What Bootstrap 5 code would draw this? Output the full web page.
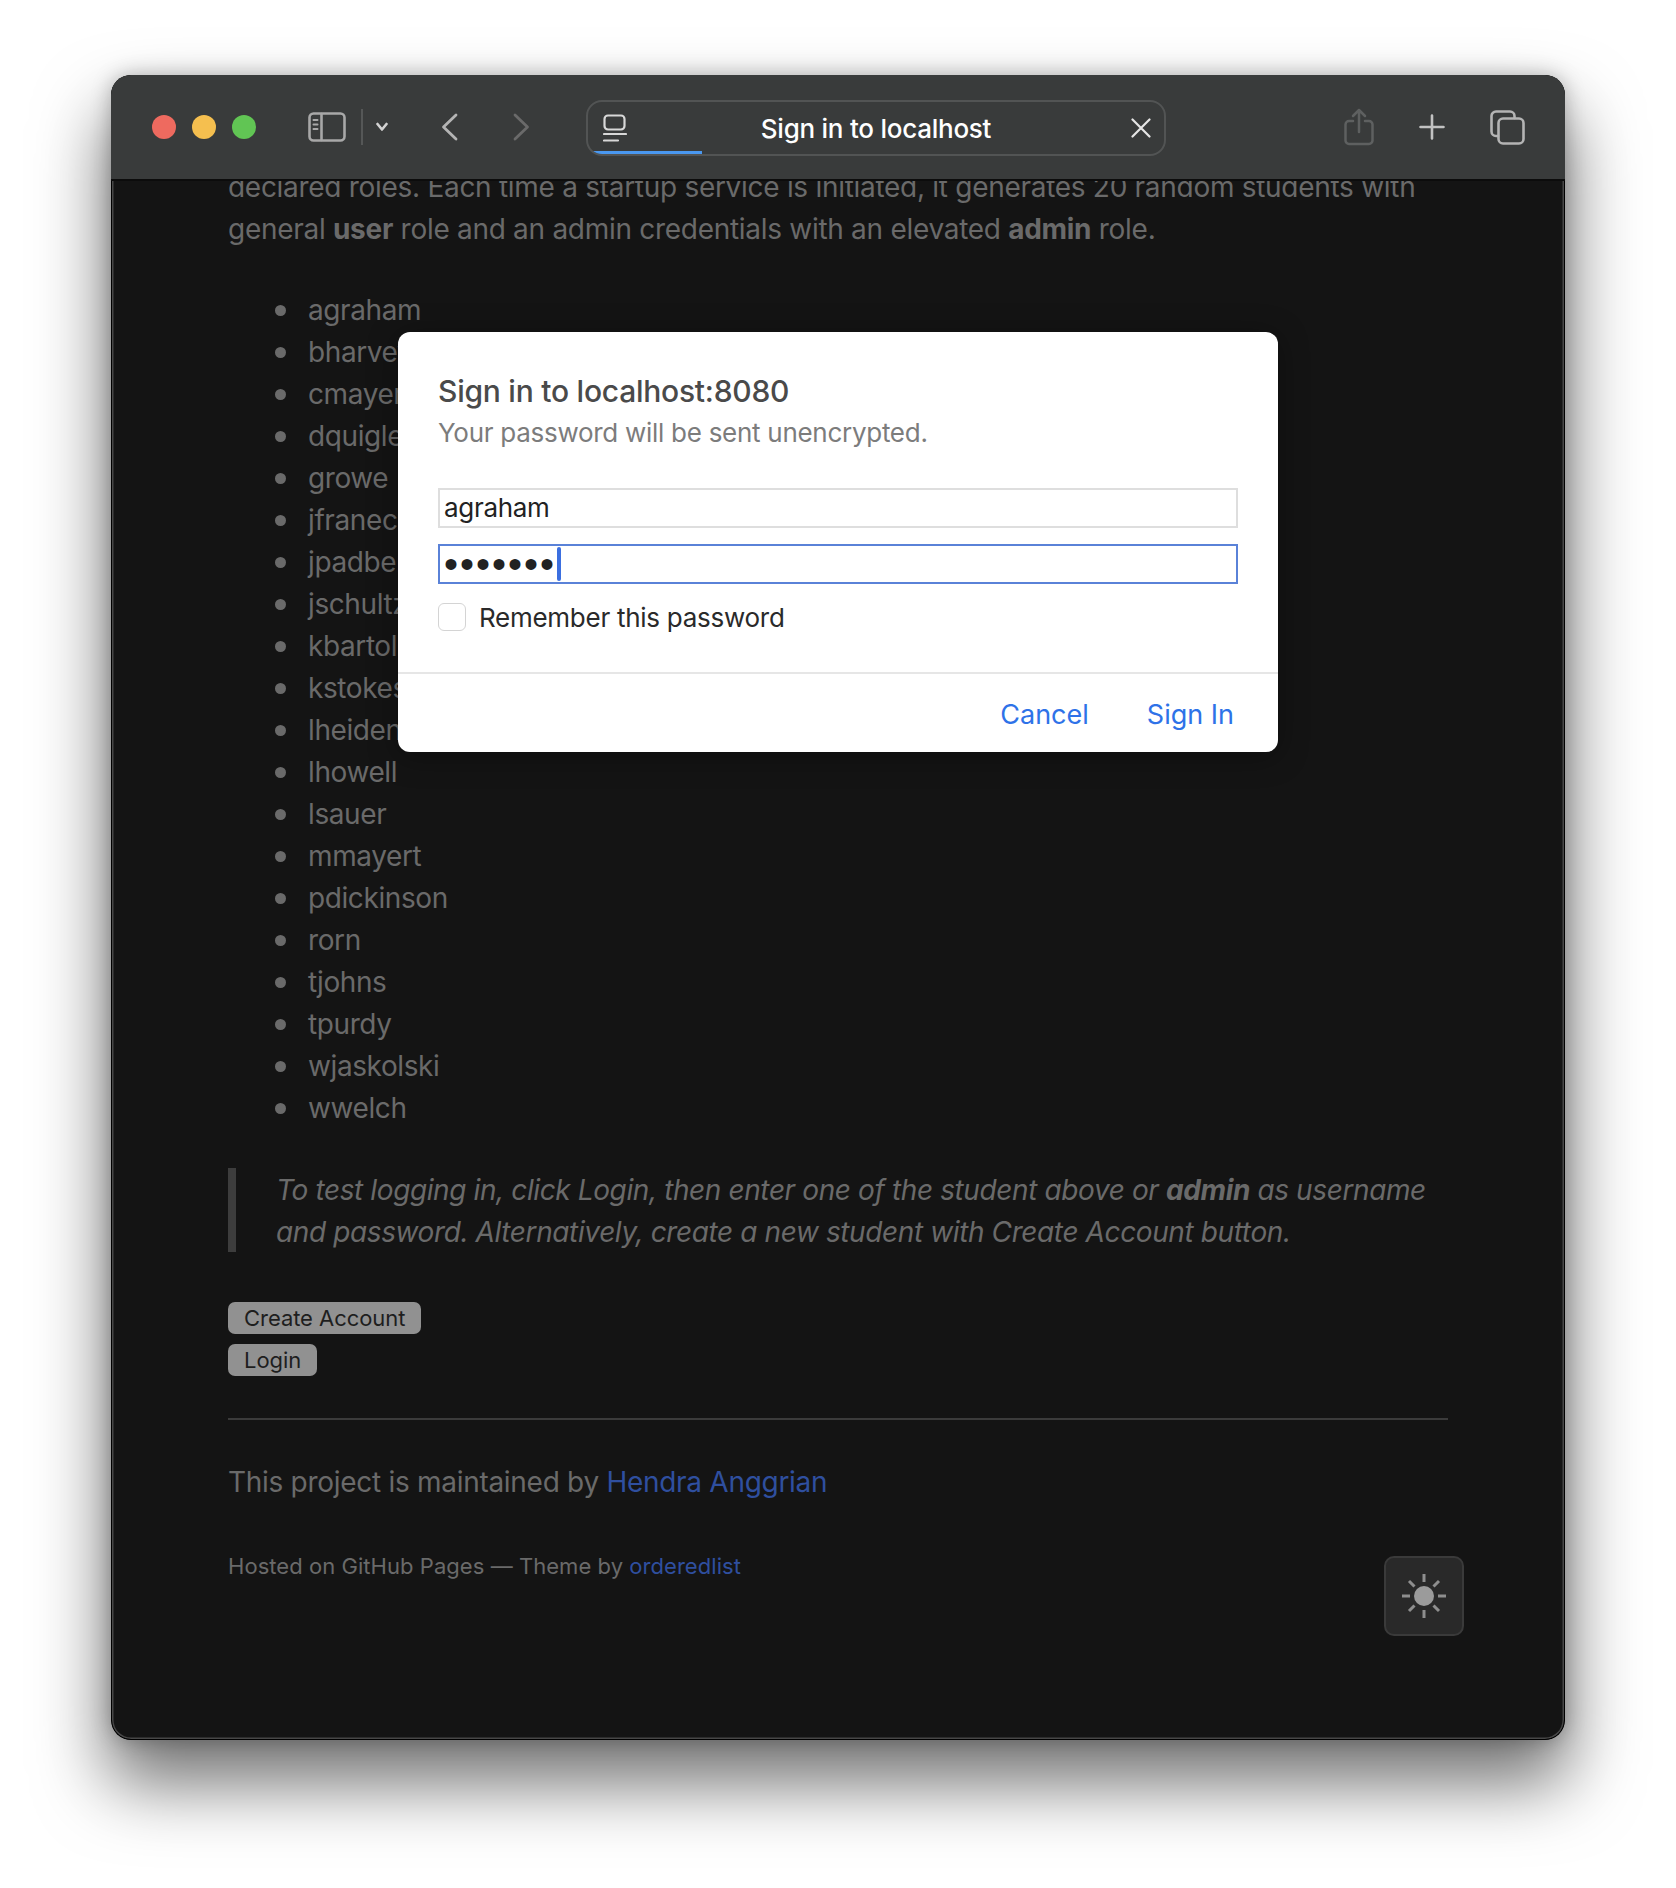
<!DOCTYPE html>
<html lang="en">
<head>
  <meta charset="UTF-8" />
  <meta name="viewport" content="width=device-width, initial-scale=1.0"/>
  <title>Sign in to localhost</title>
  <link href="https://cdn.jsdelivr.net/npm/bootstrap@5.3.2/dist/css/bootstrap.min.css" rel="stylesheet" />
  <style>
    body { background: #fff; font-family: Inter, sans-serif; height: 1888px; overflow: hidden; }
    .mac-window { position: relative; margin: 75px 0 0 111px; width: 1454px; height: 1665px; border-radius: 20px; overflow: hidden; background: #141414; }
    .window-shadow { position: absolute; left: 111px; top: 75px; width: 1454px; height: 1665px; border-radius: 20px; box-shadow: 0 40px 70px 4px rgba(0,0,0,.55), 0 0 20px rgba(0,0,0,.25); }
    .mac-window::after { content: ""; position: absolute; inset: 0; border-radius: 20px; border: 1px solid #000; box-shadow: inset 0 0 0 1.5px #474747; pointer-events: none; }

    .toolbar { height: 106px; flex: none; background: #393b3b; border-bottom: 2px solid #0c0c0c; padding-left: 41px; position: relative; z-index: 2; }
    .light { width: 24px; height: 24px; border-radius: 50%; margin-right: 16px; }
    .light-red { background: #ee6a5f; }
    .light-yellow { background: #f5bf4f; }
    .light-green { background: #61c554; }
    .toolbar svg { display: block; flex: none; fill: none; stroke-linecap: round; stroke-linejoin: round; }
    .ic-sidebar { margin-left: 36px; }
    .tb-sep { width: 2px; height: 36px; background: #555757; margin-left: 15px; }
    .ic-chev { margin-left: 13px; }
    .ic-back { margin-left: 53px; }
    .ic-fwd { margin-left: 55px; }
    .addr { margin-left: 56px; width: 580px; height: 56px; margin-top: 2px; border: 2px solid #525454; border-radius: 16px; position: relative; overflow: hidden; color: #fff; font-size: 26px; font-weight: 500; letter-spacing: -.25px; }
    .addr-progress { position: absolute; left: 0; bottom: -2px; width: 114px; height: 5px; background: #4a98f0; }
    .addr-icon { position: absolute; left: 15px; top: 12px; }
    .addr-close { position: absolute; right: 13px; top: 16px; }
    .ic-share { margin-left: 178px; }
    .ic-plus { margin-left: 45px; }
    .ic-tabs { margin-left: 45px; }

    .page { color: #6a6a6a; font-size: 28px; line-height: 42px; letter-spacing: -.29px; padding-left: 117px; width: 1336px; margin-top: -15px; }
    .page p { margin: 0; }
    .page strong { font-weight: 700; }
    .students { list-style: none; margin: 39px 0 0; padding-left: 80px; letter-spacing: -.4px; }
    .students li { position: relative; }
    .students li::before { content: ""; position: absolute; left: -33px; top: 16px; width: 11px; height: 11px; border-radius: 50%; background: #6a6a6a; }
    .quote-note { margin: 39px 0 50px; border-left: 8px solid #3d3d3d; padding: 1px 0 0 40px; height: 84px; font-style: italic; letter-spacing: -.39px; width: 1219px; }
    .gray-btn { display: block; width: fit-content; height: 32px; line-height: 32px; padding: 0 16px; background: #919191; color: #1e1e1e; border-radius: 7px; font-size: 22px; letter-spacing: -.05px; margin-bottom: 10px; }
    .page-rule { border: 0; border-top: 2px solid #3b3b3b; opacity: 1; margin: 42px 0 41px; width: 1220px; }
    .page a { color: #2f4f9f; text-decoration: none; }
    .foot-note { font-size: 22px; line-height: 36px; margin-top: 45px !important; letter-spacing: .05px; }

    .theme-btn { position: absolute; right: 101px; bottom: 104px; width: 80px; height: 80px; background: #292929; border: 2px solid #3a3a3a; border-radius: 10px; }

    .auth-dialog { position: absolute; left: 287px; top: 257px; width: 880px; height: 420px; background: #fff; border-radius: 12px; z-index: 3; overflow: hidden; box-shadow: 0 4px 30px rgba(0,0,0,.35); }
    .auth-body { padding: 40px 40px 0; height: 342px; border-bottom: 2px solid #e6e6e6; }
    .auth-title { color: #4a4a4a; font-size: 30px; line-height: 38px; font-weight: 500; letter-spacing: -.24px; margin: 0; }
    .auth-sub { color: #7c7c7c; font-size: 26px; line-height: 44px; letter-spacing: -.28px; padding-top: 1px; margin: 0 0 33px; }
    .auth-input { display: block; width: 800px; height: 40px; border: 2px solid #dedede; border-radius: 0; padding: 0 4px 2px; font-size: 26px; letter-spacing: -.3px; color: #222; margin-bottom: 16px; background: #fff; box-shadow: none; }
    .auth-pass-wrap { position: relative; }
    .auth-input.is-on { border-color: #5a82d8; font-family: "Liberation Sans", sans-serif; font-size: 40px; letter-spacing: 2px; padding: 0 4px; line-height: 36px; }
    .auth-caret { position: absolute; left: 119px; top: 3px; width: 4px; height: 34px; background: #3b6fe0; border-radius: 2px; }
    .auth-check { margin-top: -1px; }
    .auth-check .form-check-input { width: 28px; height: 28px; margin: 0; border: 1.5px solid #d4d4d4; border-radius: 6px; flex: none; }
    .auth-check label { color: #2a2a2a; font-size: 26px; line-height: 34px; letter-spacing: -.27px; margin-left: 13px; padding-top: 2px; }
    .auth-foot { height: 78px; padding: 4px 44px 0 0; gap: 58px; }
    .auth-foot a { color: #2e72e8; font-size: 27px; text-decoration: none; }
  </style>
</head>
<body>
  <div class="window-shadow"></div>
  <div class="mac-window d-flex flex-column">
    <div class="toolbar d-flex align-items-center">
      <div class="light light-red"></div>
      <div class="light light-yellow"></div>
      <div class="light light-green"></div>
      <svg class="ic-sidebar" width="38" height="30" viewBox="0 0 38 30" stroke="#a8a8a8" stroke-width="2.6">
        <rect x="1.5" y="1.5" width="35" height="27" rx="4"/>
        <path d="M13.5 2v26"/>
        <path d="M5.5 8h4M5.5 12.500h4M5.5 17h4" stroke-width="2"/>
      </svg>
      <div class="tb-sep"></div>
      <svg class="ic-chev" width="12" height="10" viewBox="0 0 12 10" stroke="#d2d2d2" stroke-width="2.600">
        <path d="M1.500 2l4.500 5.500 4.500-5.500"/>
      </svg>
      <svg class="ic-back" width="17" height="28" viewBox="0 0 17 28" stroke="#b4b4b4" stroke-width="2.800">
        <path d="M15 2L2.500 14 15 26"/>
      </svg>
      <svg class="ic-fwd" width="17" height="28" viewBox="0 0 17 28" stroke="#6a6a6a" stroke-width="2.800">
        <path d="M2 2l12.500 12L2 26"/>
      </svg>
      <div class="addr d-flex align-items-center justify-content-center">
        <svg class="addr-icon" width="24" height="28" viewBox="0 0 24 28" stroke="#d8d8d8" stroke-width="2.200">
          <rect x="1.500" y="1.500" width="20" height="14" rx="3.500"/>
          <path d="M1 20h22M1 26.500h14"/>
        </svg>
        <span>Sign in to localhost</span>
        <svg class="addr-close" width="20" height="20" viewBox="0 0 20 20" stroke="#e6e6e6" stroke-width="2.200">
          <path d="M1.500 1.500l17 17M18.500 1.500l-17 17"/>
        </svg>
        <div class="addr-progress"></div>
      </div>
      <svg class="ic-share" width="30" height="38" viewBox="0 0 30 38" stroke="#5e6060" stroke-width="2.500">
        <path d="M9 13H5a3.500 3.500 0 0 0-3.500 3.500v16A3.500 3.500 0 0 0 5 36h20a3.500 3.500 0 0 0 3.500-3.500v-16A3.500 3.500 0 0 0 25 13h-4"/>
        <path d="M15 24V2M9 8l6-6 6 6"/>
      </svg>
      <svg class="ic-plus" width="26" height="26" viewBox="0 0 26 26" stroke="#c2c2c2" stroke-width="2.600">
        <path d="M13 1.500v23M1.500 13h23"/>
      </svg>
      <svg class="ic-tabs" width="35" height="35" viewBox="0 0 35 35" stroke="#b4b4b4" stroke-width="2.600">
        <path d="M8 26H6a4.500 4.500 0 0 1-4.500-4.500V6A4.500 4.500 0 0 1 6 1.500h14A4.500 4.500 0 0 1 24.500 6v2"/>
        <rect x="8.500" y="8.500" width="25" height="25" rx="4.500"/>
      </svg>
    </div>

    <div class="page">
      <p>declared roles. Each time a startup service is initiated, it generates 20 random students with general <strong>user</strong> role and an admin credentials with an elevated <strong>admin</strong> role.</p>
      <ul class="students">
        <li>agraham</li>
        <li>bharvey</li>
        <li>cmayer</li>
        <li>dquigley</li>
        <li>growe</li>
        <li>jfranecki</li>
        <li>jpadberg</li>
        <li>jschultz</li>
        <li>kbartoletti</li>
        <li>kstokes</li>
        <li>lheidenreich</li>
        <li>lhowell</li>
        <li>lsauer</li>
        <li>mmayert</li>
        <li>pdickinson</li>
        <li>rorn</li>
        <li>tjohns</li>
        <li>tpurdy</li>
        <li>wjaskolski</li>
        <li>wwelch</li>
      </ul>
      <div class="quote-note">To test logging in, click Login, then enter one of the student above or <strong>admin</strong> as username and password. Alternatively, create a new student with Create Account button.</div>
      <div class="gray-btn">Create Account</div>
      <div class="gray-btn">Login</div>
      <hr class="page-rule">
      <p>This project is maintained by <a href="#">Hendra Anggrian</a></p>
      <p class="foot-note">Hosted on GitHub Pages — Theme by <a href="#">orderedlist</a></p>
    </div>

    <div class="theme-btn d-flex align-items-center justify-content-center">
      <svg width="44" height="44" viewBox="0 0 44 44" stroke="#8e8e8e" stroke-width="3">
        <circle cx="22" cy="22" r="10" fill="#9b9b9b" stroke="none"/>
        <path d="M22 0v8M22 36v8M0 22h8M36 22h8M7 7l5.500 5.500M31.500 31.500L37 37M37 7l-5.500 5.500M12.500 31.500L7 37"/>
      </svg>
    </div>

    <div class="auth-dialog">
      <div class="auth-body">
        <p class="auth-title">Sign in to localhost:8080</p>
        <p class="auth-sub">Your password will be sent unencrypted.</p>
        <input class="auth-input" type="text" value="agraham">
        <div class="auth-pass-wrap">
          <input class="auth-input is-on" type="password" value="1234567">
          <div class="auth-caret"></div>
        </div>
        <div class="auth-check d-flex align-items-center">
          <input class="form-check-input" type="checkbox" id="rememberPw">
          <label for="rememberPw">Remember this password</label>
        </div>
      </div>
      <div class="auth-foot d-flex align-items-center justify-content-end">
        <a href="#">Cancel</a>
        <a href="#">Sign In</a>
      </div>
    </div>
  </div>
</body>
</html>
